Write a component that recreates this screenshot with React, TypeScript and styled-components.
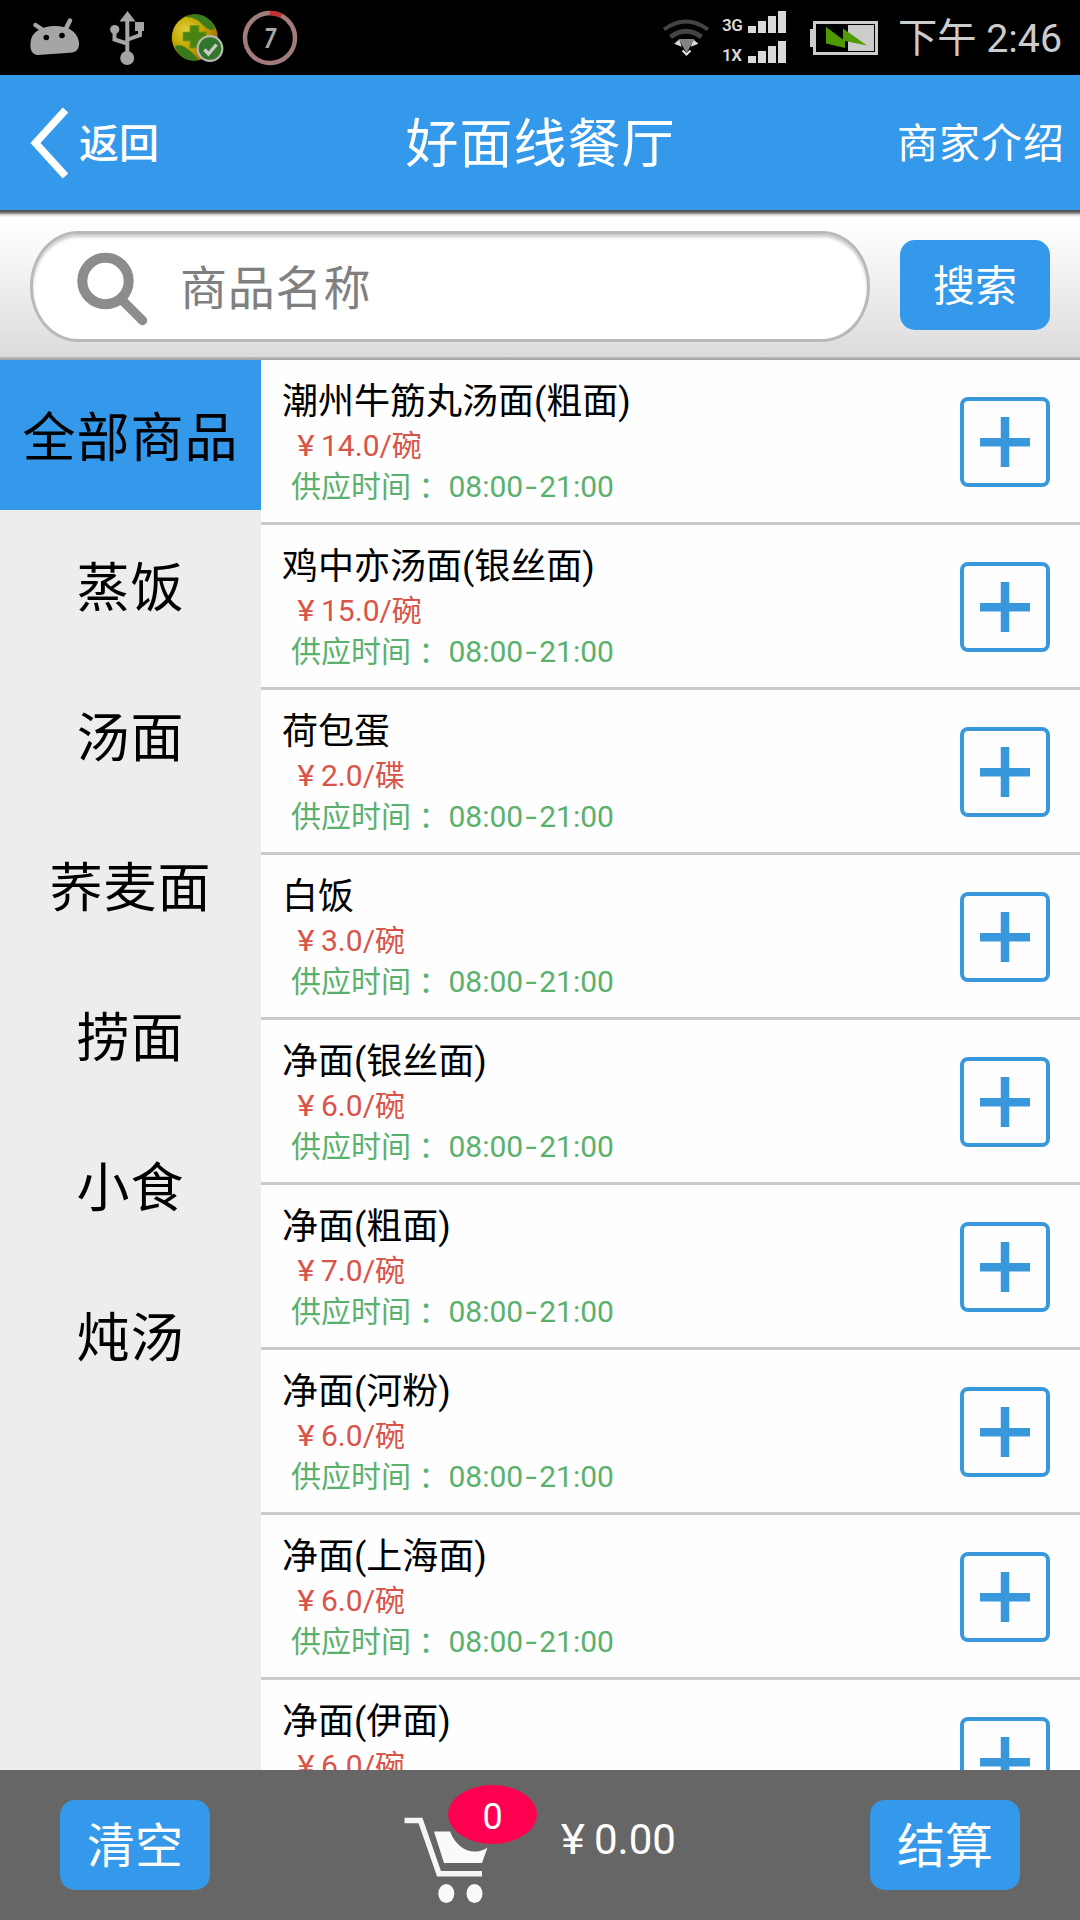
import React from 'react';
import styled, { createGlobalStyle } from 'styled-components';

const GlobalStyle = createGlobalStyle`
  * { box-sizing: border-box; }
  body {
    margin: 0;
    background: #fefefe;
    font-family: Roboto, "Noto Sans CJK SC", sans-serif;
    overflow: hidden;
  }
  svg { display: block; flex: none; }
`;

const BLUE = '#3499ea';

const Screen = styled.div`
  width: 1080px;
  height: 1920px;
  display: flex;
  flex-direction: column;
  overflow: hidden;
`;

const StatusBar = styled.div`
  height: 75px;
  flex: none;
  display: flex;
  justify-content: space-between;
  padding: 0 18px 0 30px;
  background: #000;
`;

const Notifications = styled.div`
  width: 268px;
  display: flex;
  align-items: center;
`;

const IconSlot = styled.div<{ $before: number }>`
  margin-left: ${(p) => p.$before}px;
`;

const SystemIcons = styled.div`
  display: flex;
  align-items: center;
  gap: 22px;
`;

const Signals = styled.div`
  display: flex;
  flex-direction: column;
  gap: 8px;
  margin: 0 2px 0 -10px;
  padding-bottom: 1px;
`;

const SignalRow = styled.div`
  display: flex;
  align-items: flex-end;
  height: 22px;
  width: 64px;
  justify-content: space-between;
`;

const SignalLabel = styled.span`
  font-size: 17px;
  line-height: 15px;
  font-weight: 600;
  letter-spacing: -0.5px;
  color: #d9d9d9;
`;

const Bars = styled.div`
  display: flex;
  align-items: flex-end;
  gap: 2px;
`;

const Bar = styled.i<{ $h: number }>`
  width: 8px;
  height: ${(p) => p.$h}px;
  background: #d9d9d9;
`;

const Clock = styled.span`
  width: 162px;
  display: flex;
  justify-content: flex-end;
  padding-top: 3px;
  font-size: 39.3px;
  line-height: 72px;
  color: #ccc;
  white-space: nowrap;
`;

const Header = styled.header`
  height: 135px;
  flex: none;
  display: grid;
  grid-template-columns: 1fr auto 1fr;
  align-items: center;
  padding: 0 15px 0 30px;
  background: ${BLUE};
  color: #fff;
`;

const Back = styled.div`
  display: flex;
  align-items: center;
  gap: 10px;
`;

const BackLabel = styled.span`
  padding-top: 4px;
  font-size: 40px;
  font-weight: 500;
  line-height: 60px;
`;

const Title = styled.h1`
  margin: 0;
  padding: 5px 14px 0 0;
  font-size: 53px;
  font-weight: 400;
  letter-spacing: 1px;
  line-height: 80px;
`;

const Intro = styled.div`
  justify-self: end;
  padding-top: 3px;
  font-size: 41px;
  letter-spacing: 1px;
  line-height: 60px;
`;

const SearchBar = styled.div`
  height: 150px;
  flex: none;
  display: flex;
  align-items: flex-start;
  gap: 30px;
  padding: 21px 30px 0;
  background:
    linear-gradient(#575757 0 2px, #777 2px 3px, #9a9a9a 3px 4px, #c8c8c8 4px 5px, #e2e2e2 5px 6px, #f4f4f4 6px 7px, transparent 7px) top / 100% 7px no-repeat,
    linear-gradient(#bbb, #a2a2a2) bottom / 100% 3px no-repeat,
    linear-gradient(#fff 8px, #fbfbfb 30px, #dcdcdc 145px);
`;

const SearchField = styled.div`
  width: 840px;
  height: 111px;
  display: flex;
  align-items: center;
  gap: 33px;
  padding: 4px 0 0 42px;
  border: 3px solid #b9b9b9;
  border-radius: 48px / 55px;
  background: #fff;
  box-shadow: inset 0 3px 3px #ccc;
`;

const Placeholder = styled.span`
  font-size: 47px;
  letter-spacing: 0.8px;
  line-height: 70px;
  color: #808080;
`;

const Button = styled.button<{ $size: number }>`
  width: 150px;
  height: 90px;
  padding: 4px 0 0;
  border: 0;
  border-radius: 15px;
  background: ${BLUE};
  color: #fff;
  font-family: inherit;
  font-size: ${(p) => p.$size}px;
  line-height: 86px;
`;

const SearchButton = styled(Button)`
  margin-top: 9px;
`;

const Body = styled.main`
  height: 1410px;
  flex: none;
  display: flex;
  overflow: hidden;
`;

const Sidebar = styled.nav`
  width: 261px;
  flex: none;
  background: #ededeb;
`;

const Category = styled.div<{ $active?: boolean }>`
  height: 150px;
  display: flex;
  align-items: center;
  justify-content: center;
  padding-top: 8px;
  font-size: 53px;
  letter-spacing: 1px;
  line-height: 80px;
  color: #000;
  background: ${(p) => (p.$active ? BLUE : 'transparent')};
`;

const List = styled.div`
  flex: 1;
  background: #fefefe;
`;

const Row = styled.div`
  height: 165px;
  display: flex;
  justify-content: space-between;
  padding: 0 30px 0 21px;
  border-bottom: 3px solid #cbcbcb;
`;

const Info = styled.div`
  padding-top: 20px;
  white-space: nowrap;
`;

const Name = styled.div`
  font-size: 36px;
  line-height: 45px;
  color: #000;
`;

const Price = styled.div`
  padding-left: 9px;
  font-size: 30px;
  line-height: 41px;
  color: #d95448;
`;

const Hours = styled.div`
  padding-left: 9px;
  font-size: 30px;
  line-height: 41px;
  color: #5ab16d;
`;

const Yen = styled.span`
  display: inline-block;
  width: 1em;
  text-align: center;
  transform: scaleX(1.1);
`;

const Colon = styled.span`
  display: inline-block;
  font-family: "Noto Sans CJK TC", sans-serif;
  line-height: 1;
  transform: translateY(2px);
`;

const Dash = styled.span`
  display: inline-block;
  width: 16px;
  text-align: center;
  transform: scaleX(1.35);
`;

const AddButton = styled.div`
  width: 90px;
  height: 90px;
  margin-top: 37px;
  display: flex;
  align-items: center;
  justify-content: center;
  border: 4px solid #3998db;
  border-radius: 8px;
`;

const Footer = styled.footer`
  height: 150px;
  flex: none;
  display: flex;
  align-items: center;
  padding: 0 60px;
  background: #666;
`;

const Cart = styled.div`
  position: relative;
  width: 84px;
  height: 150px;
  margin-left: 194px;
  padding-top: 46px;
`;

const Badge = styled.span`
  position: absolute;
  left: 44px;
  top: 15px;
  width: 89px;
  height: 59px;
  border-radius: 50%;
  background: #ff0050;
  color: #fff;
  font-size: 36px;
  line-height: 64px;
  text-align: center;
`;

const Total = styled.div`
  flex: 1;
  padding: 0 0 10px 64px;
  font-size: 42px;
  line-height: 50px;
  color: #fff;
`;

const AndroidIcon = () => (
  <svg width="50" height="75" viewBox="30 0 50 75">
    <g fill="#a5a5a5" stroke="#a5a5a5">
      <path d="M35.5 25l9 6M70 20.500l-4.500 9" strokeWidth="4.500" strokeLinecap="round" />
      <path stroke="none" d="M30.500 43C31 32 41 27 53 26C66 25.500 77 30 79 42C79.500 50 76 52.500 70 52.700L38 55C32 54.500 30 50 30.500 43Z" />
    </g>
    <circle cx="46.300" cy="37.500" r="2.800" />
    <circle cx="62" cy="35.500" r="2.800" />
  </svg>
);

const UsbIcon = () => (
  <svg width="36" height="75" viewBox="109 0 36 75">
    <g fill="#a5a5a5">
      <path d="M127.500 11L135.500 21.500H119.500Z" />
      <circle cx="127.200" cy="58" r="7" />
      <circle cx="114.700" cy="29.500" r="4.600" />
      <path d="M135 22h9v9h-9z" />
    </g>
    <path d="M127.300 20V54M114.500 30V39.500L127 43.500M140 30V35L128 39.500" fill="none" stroke="#a5a5a5" strokeWidth="4" />
  </svg>
);

const GuardIcon = () => (
  <svg width="53" height="75" viewBox="171 0 53 75">
    <defs>
      <radialGradient id="guard" cx="0.3" cy="0.35" r="0.75">
        <stop offset="0" stopColor="#e0cf3c" />
        <stop offset="0.45" stopColor="#c3a800" />
        <stop offset="1" stopColor="#a66f08" />
      </radialGradient>
    </defs>
    <circle cx="194.800" cy="37.500" r="23" fill="url(#guard)" />
    <path d="M184 17C198 10 212 17 215 29C209 31 206 28 201 23C196 18 190 17 184 17Z" fill="#3b7d1c" />
    <path d="M175 46C182 43 190 50 199 60C188 63 178 57 175 46Z" fill="#37791b" />
    <path d="M190.500 26h8v6.500h7v8h-7v7h-8v-7h-7v-8h7z" fill="#47830f" stroke="#5b8d16" strokeWidth="1.500" strokeLinejoin="round" />
    <circle cx="210" cy="48.500" r="12.300" fill="#31762b" stroke="#b5b8b2" strokeWidth="2.200" />
    <path d="M204.500 49.500l4 4.500 8-9.500" fill="none" stroke="#c9c9c9" strokeWidth="3.400" />
  </svg>
);

const RingIcon = () => (
  <svg width="56" height="75" viewBox="242 0 56 75">
    <circle cx="270" cy="38" r="25" fill="none" stroke="#a27c7c" strokeWidth="4.500" />
    <path d="M270 13A25 25 0 0 1 281.500 15.800" fill="none" stroke="#c33030" strokeWidth="4.500" />
    <text x="264" y="47.500" fontFamily="Roboto" fontSize="27" fontWeight="700" fontStyle="italic" fill="#a8a8a8" textLength="12" lengthAdjust="spacingAndGlyphs">7</text>
  </svg>
);

const WifiIcon = () => (
  <svg width="48" height="75" viewBox="662 0 48 75">
    <g fill="none" stroke="#444" strokeWidth="4">
      <path d="M664 29.500Q686 13.500 708 29.500" />
      <path d="M670.500 37Q686 25.500 701.500 37" strokeWidth="5" />
    </g>
    <path d="M675.500 43.500l3.500-3 1.500 5zM697 43.500l-3.500-3-1.500 5z" fill="#d9d9d9" stroke="#d9d9d9" strokeWidth="1.500" />
    <path d="M678.500 39H694.500L686.500 53Z" fill="#848484" />
    <path d="M682.500 50.500l4 4 4-4" fill="none" stroke="#e4e4e4" strokeWidth="2" />
  </svg>
);

const BatteryIcon = () => (
  <svg width="68" height="75" viewBox="810 0 68 75">
    <path d="M810 29h4v18h-4z" fill="#ccc" />
    <rect x="814.500" y="22.500" width="62" height="31" fill="none" stroke="#ccc" strokeWidth="3" />
    <path d="M848 25h26v26h-26z" fill="#ccc" />
    <path d="M826 27L843 39.500V28.500L867 45.500L845 41V48L826 43.500Z" fill="#4f9a00" />
  </svg>
);

const BackIcon = () => (
  <svg width="39" height="72" viewBox="30 106 39 72">
    <path d="M65.500 109L35.500 142L65.500 175" fill="none" stroke="#fff" strokeWidth="7.500" />
  </svg>
);

const SearchIcon = () => (
  <svg width="72" height="76" viewBox="75 251 72 76">
    <circle cx="105.500" cy="281" r="23.200" fill="none" stroke="#8c8c8c" strokeWidth="10" />
    <path d="M122 300L142.500 320.500" stroke="#8c8c8c" strokeWidth="9.500" strokeLinecap="round" />
  </svg>
);

const PlusIcon = () => (
  <svg width="50" height="50" viewBox="0 0 50 50">
    <path d="M0 25.300H50M25 0V50" stroke="#3998db" strokeWidth="8.500" />
  </svg>
);

const CartIcon = () => (
  <svg width="84" height="88" viewBox="404 1816 84 88">
    <path d="M404.500 1820.500H420.500L439 1873.700H482" fill="none" stroke="#f6f6f6" strokeWidth="5.400" />
    <path d="M434 1831.500H450C455 1844 464 1851.500 475 1851.500C480 1851.500 485 1849.500 487.500 1847.500L482 1863H444Z" fill="#fafafa" />
    <ellipse cx="446.300" cy="1893.500" rx="8" ry="9.600" fill="#fafafa" />
    <ellipse cx="474.500" cy="1893.500" rx="8" ry="9.600" fill="#fafafa" />
  </svg>
);

const Signal = ({ label }: { label: string }) => (
  <SignalRow>
    <SignalLabel>{label}</SignalLabel>
    <Bars>
      {[7, 12, 17, 22].map((h) => (
        <Bar key={h} $h={h} />
      ))}
    </Bars>
  </SignalRow>
);

const categories = ['全部商品', '蒸饭', '汤面', '荞麦面', '捞面', '小食', '炖汤'];

const dishes = [
  { name: '潮州牛筋丸汤面(粗面)', price: '14.0/碗' },
  { name: '鸡中亦汤面(银丝面)', price: '15.0/碗' },
  { name: '荷包蛋', price: '2.0/碟' },
  { name: '白饭', price: '3.0/碗' },
  { name: '净面(银丝面)', price: '6.0/碗' },
  { name: '净面(粗面)', price: '7.0/碗' },
  { name: '净面(河粉)', price: '6.0/碗' },
  { name: '净面(上海面)', price: '6.0/碗' },
  { name: '净面(伊面)', price: '6.0/碗' },
];

export default function App() {
  return (
    <Screen>
      <GlobalStyle />
      <StatusBar>
        <Notifications>
          <IconSlot $before={0}>
            <AndroidIcon />
          </IconSlot>
          <IconSlot $before={29}>
            <UsbIcon />
          </IconSlot>
          <IconSlot $before={26}>
            <GuardIcon />
          </IconSlot>
          <IconSlot $before={18}>
            <RingIcon />
          </IconSlot>
        </Notifications>
        <SystemIcons>
          <WifiIcon />
          <Signals>
            <Signal label="3G" />
            <Signal label="1X" />
          </Signals>
          <BatteryIcon />
          <Clock>下午 2:46</Clock>
        </SystemIcons>
      </StatusBar>
      <Header>
        <Back>
          <BackIcon />
          <BackLabel>返回</BackLabel>
        </Back>
        <Title>好面线餐厅</Title>
        <Intro>商家介绍</Intro>
      </Header>
      <SearchBar>
        <SearchField>
          <SearchIcon />
          <Placeholder>商品名称</Placeholder>
        </SearchField>
        <SearchButton $size={42}>搜索</SearchButton>
      </SearchBar>
      <Body>
        <Sidebar>
          {categories.map((c, i) => (
            <Category key={c} $active={i === 0}>
              {c}
            </Category>
          ))}
        </Sidebar>
        <List>
          {dishes.map((d) => (
            <Row key={d.name}>
              <Info>
                <Name>{d.name}</Name>
                <Price>
                  <Yen>¥</Yen>
                  {d.price}
                </Price>
                <Hours>
                  供应时间<Colon>：</Colon> 08:00<Dash>-</Dash>21:00
                </Hours>
              </Info>
              <AddButton>
                <PlusIcon />
              </AddButton>
            </Row>
          ))}
        </List>
      </Body>
      <Footer>
        <Button $size={48}>清空</Button>
        <Cart>
          <CartIcon />
          <Badge>0</Badge>
        </Cart>
        <Total>
          <Yen>¥</Yen>0.00
        </Total>
        <Button $size={48}>结算</Button>
      </Footer>
    </Screen>
  );
}
